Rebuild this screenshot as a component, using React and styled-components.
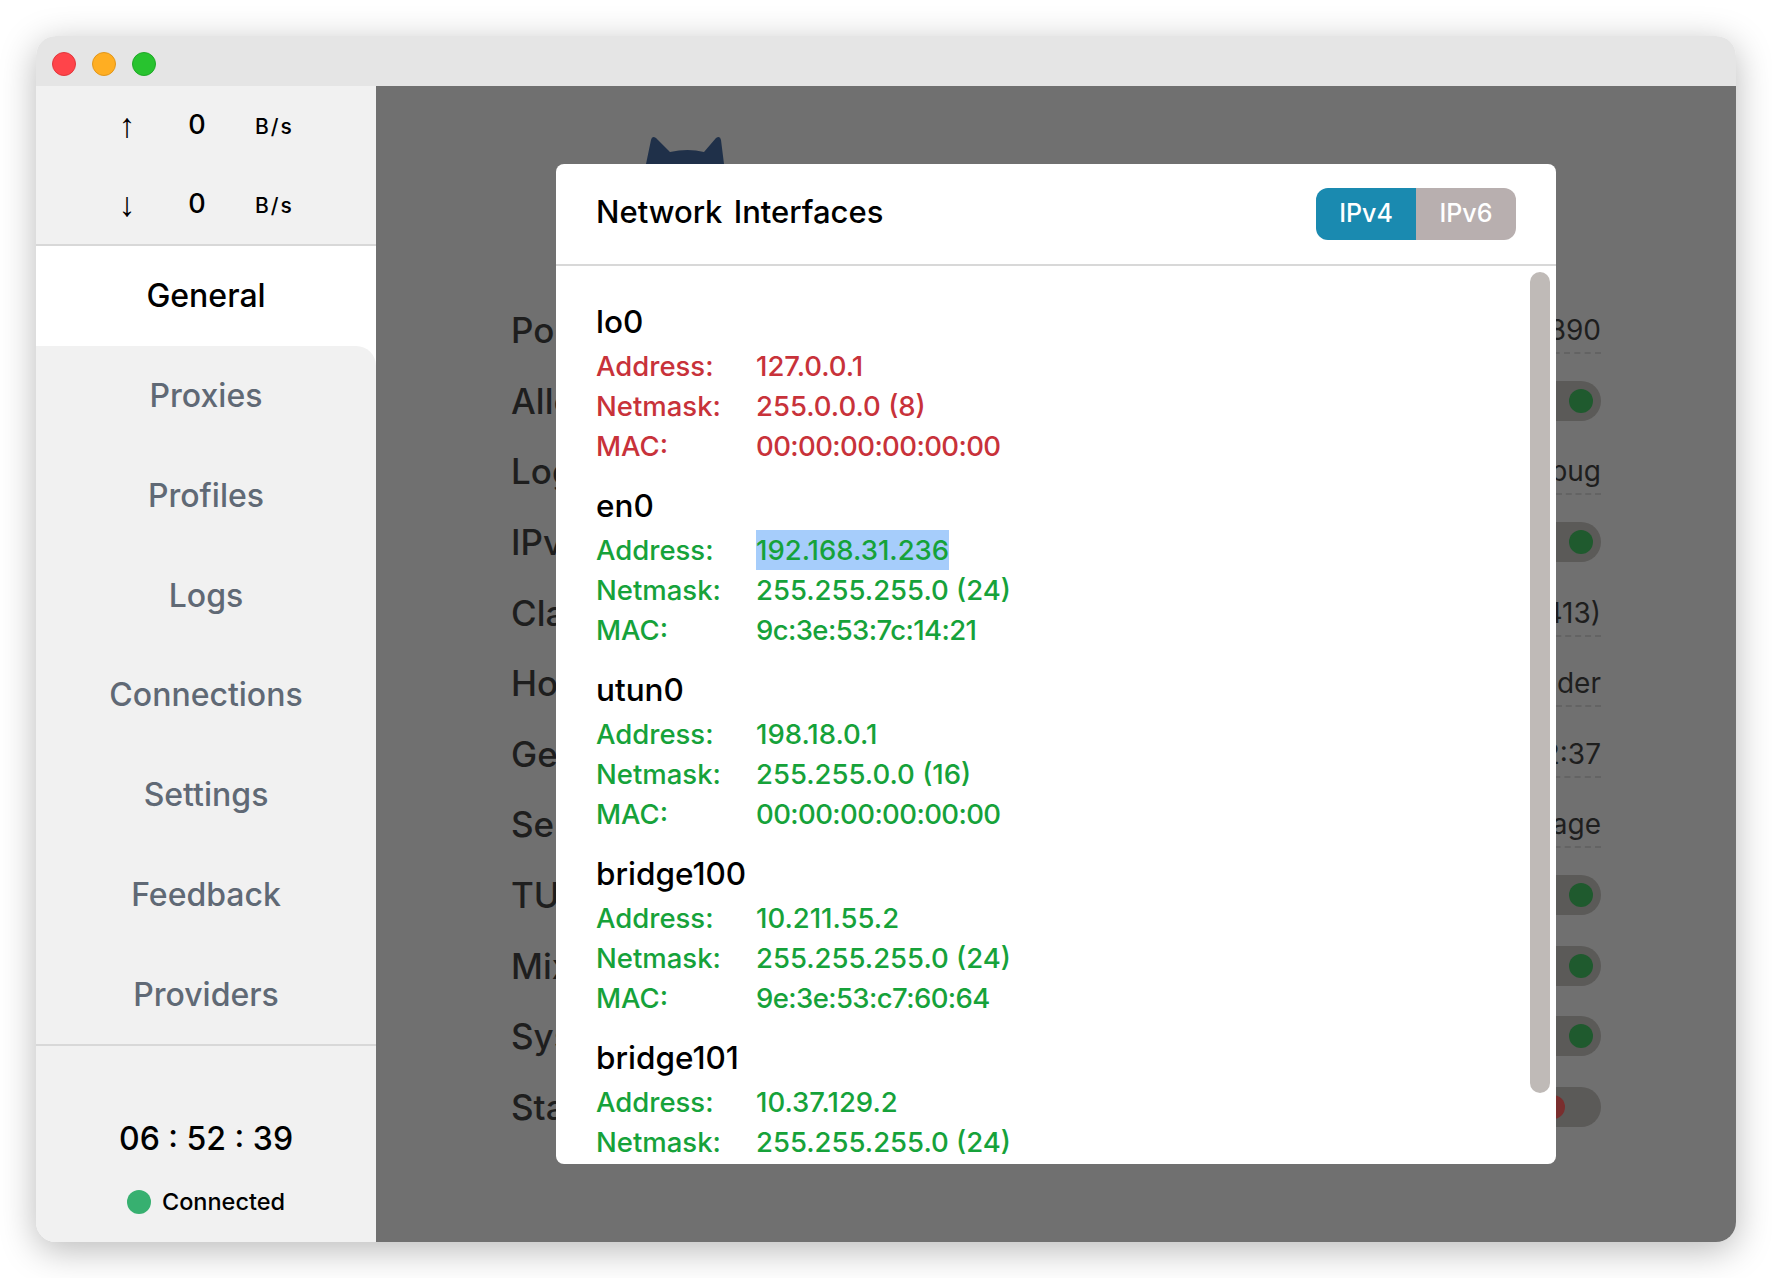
import React from 'react';
import styled, { createGlobalStyle } from 'styled-components';

const GlobalStyle = createGlobalStyle`
  html, body {
    margin: 0;
    background: #fff;
  }
  body {
    font-family: Inter, 'Liberation Sans', Arial, sans-serif;
    -webkit-font-smoothing: antialiased;
  }
`;

const Page = styled.div`
  width: 1772px;
  height: 1278px;
  padding: 36px;
  box-sizing: border-box;
  overflow: hidden;
`;

const Window = styled.div`
  width: 1700px;
  height: 1206px;
  border-radius: 20px;
  overflow: hidden;
  display: flex;
  flex-direction: column;
  box-shadow: 0 8px 36px rgba(0, 0, 0, 0.28);
`;

const TitleBar = styled.div`
  height: 50px;
  flex: none;
  display: flex;
  align-items: center;
  gap: 16px;
  padding: 5px 0 0 16px;
  box-sizing: border-box;
  background: #e5e5e5;
`;

const Light = styled.span`
  width: 24px;
  height: 24px;
  border-radius: 50%;
  box-sizing: border-box;
  background: ${({ $color }) => $color};
  border: 1px solid ${({ $edge }) => $edge};
`;

const Body = styled.div`
  flex: 1;
  min-height: 0;
  display: flex;
  position: relative;
`;

const Sidebar = styled.aside`
  width: 340px;
  flex: none;
  display: flex;
  flex-direction: column;
  background: #f1f1f1;
`;

const Speed = styled.div`
  height: 160px;
  box-sizing: border-box;
  flex: none;
  display: grid;
  grid-template-columns: 64px 76px 1fr;
  grid-auto-rows: 79px;
  padding-left: 59px;
  align-items: center;
  color: #000;
  border-bottom: 2px solid #d8d8d8;
`;

const Arrow = styled.span`
  font-size: 34px;
  line-height: 40px;
  margin-top: -2px;
  text-align: center;
  font-family: 'Liberation Sans', sans-serif;
`;

const SpeedValue = styled.span`
  font-size: 27px;
  font-weight: 500;
  text-align: center;
  margin-top: -2px;
`;

const SpeedUnit = styled.span`
  font-size: 21px;
  font-weight: 500;
  letter-spacing: 2px;
  margin: 2px 0 0 20px;
`;

const Nav = styled.nav`
  flex: none;
  display: flex;
  flex-direction: column;
  background: #fff;
`;

const NavItem = styled.a`
  height: 99.75px;
  display: flex;
  align-items: center;
  justify-content: center;
  font-size: 32px;
  font-weight: 500;
  background: ${({ $active }) => ($active ? '#fff' : '#f1f1f1')};
  color: ${({ $active }) => ($active ? '#000' : '#606975')};
  border-top-right-radius: ${({ $afterActive }) => ($afterActive ? '20px' : '0')};
`;

const Footer = styled.div`
  flex: 1;
  border-top: 2px solid #d8d8d8;
  display: flex;
  flex-direction: column;
  align-items: center;
  padding-top: 73px;
  background: #f1f1f1;
  color: #000;
`;

const Clock = styled.div`
  font-size: 32px;
  font-weight: 500;
  line-height: 40px;
  white-space: pre;
`;

const Status = styled.div`
  margin-top: 23px;
  display: flex;
  align-items: center;
  gap: 11px;
  font-size: 23.5px;
  font-weight: 500;
  line-height: 40px;
`;

const StatusDot = styled.span`
  width: 24px;
  height: 24px;
  border-radius: 50%;
  background: #37b070;
`;

const Main = styled.main`
  flex: 1;
  min-width: 0;
  background: #707070;
  padding: 50px 135px 0 135px;
  box-sizing: border-box;
`;

const Logo = styled.svg`
  display: block;
  width: 240px;
  height: 159px;
  margin-left: 135px;
`;

const SettingRows = styled.div`
  display: grid;
  grid-auto-rows: 70.6px;
  color: #1e1e1e;
`;

const SettingRow = styled.div`
  display: flex;
  justify-content: space-between;
  align-items: center;
`;

const SettingLabel = styled.span`
  font-size: 35px;
  font-weight: 500;
`;

const SettingValue = styled.span`
  font-size: 28px;
  line-height: 44px;
  border-bottom: 2px dashed #636363;
  margin-top: 2px;
`;

const Toggle = styled.span`
  width: 68px;
  height: 40px;
  border-radius: 20px;
  background: #5b5a58;
  display: flex;
  align-items: center;
  padding: 0 8px;
  box-sizing: border-box;
  justify-content: ${({ $on }) => ($on ? 'flex-end' : 'flex-start')};

  &::after {
    content: '';
    width: 24px;
    height: 24px;
    border-radius: 50%;
    background: ${({ $on }) => ($on ? '#1f5a2e' : '#7a2e2e')};
  }
`;

const Modal = styled.section`
  position: absolute;
  left: 520px;
  top: 78px;
  width: 1000px;
  height: 1000px;
  border-radius: 8px;
  overflow: hidden;
  background: #fff;
  display: flex;
  flex-direction: column;
`;

const ModalHeader = styled.header`
  height: 102px;
  box-sizing: border-box;
  flex: none;
  display: flex;
  align-items: center;
  justify-content: space-between;
  padding: 0 40px;
  border-bottom: 2px solid #d8d8d8;
`;

const ModalTitle = styled.h2`
  margin: -5px 0 0;
  font-size: 31px;
  font-weight: 500;
  color: #000;
  word-spacing: 3px;
`;

const Segmented = styled.div`
  display: flex;
  border-radius: 12px;
  overflow: hidden;
`;

const Segment = styled.button`
  width: 100px;
  height: 52px;
  border: 0;
  padding: 0 0 2px;
  font: inherit;
  font-size: 25px;
  font-weight: 500;
  color: #fff;
  background: ${({ $active }) => ($active ? '#1a8ab0' : '#b8afaf')};
`;

const ModalBody = styled.div`
  flex: 1;
  min-height: 0;
  overflow: hidden;
  position: relative;
  padding: 32px 40px 0;
`;

const Thumb = styled.div`
  position: absolute;
  top: 6px;
  right: 6px;
  width: 20px;
  height: 821px;
  border-radius: 10px;
  background: #bfbab7;
`;

const Interface = styled.div`
  margin-bottom: 16px;
`;

const InterfaceName = styled.div`
  font-size: 31.5px;
  font-weight: 500;
  line-height: 48px;
  color: #000;
`;

const Line = styled.div`
  display: flex;
  font-size: 27.5px;
  font-weight: 500;
  line-height: 40px;
  color: ${({ $internal }) => ($internal ? '#c8323a' : '#16a23a')};
`;

const LineLabel = styled.span`
  width: 160px;
  flex: none;
`;

const LineValue = styled.span`
  background: ${({ $selected }) => ($selected ? '#a6cdfb' : 'transparent')};
  letter-spacing: ${({ $mac }) => ($mac ? '-0.6px' : 'normal')};
`;

const settings = [
  { label: 'Port', value: '7890' },
  { label: 'Allow LAN', on: true },
  { label: 'Log Level', value: 'debug' },
  { label: 'IPv6', on: true },
  { label: 'Clash Core', value: '1.13.0 (413)' },
  { label: 'Home Directory', value: 'Open Folder' },
  { label: 'GeoData', value: '06:52:37' },
  { label: 'Service', value: 'Manage' },
  { label: 'TUN Mode', on: true },
  { label: 'Mixin', on: true },
  { label: 'System Proxy', on: true },
  { label: 'Start with Windows', on: false },
];

const interfaces = [
  { name: 'lo0', internal: true, address: '127.0.0.1', netmask: '255.0.0.0 (8)', mac: '00:00:00:00:00:00' },
  { name: 'en0', address: '192.168.31.236', selected: true, netmask: '255.255.255.0 (24)', mac: '9c:3e:53:7c:14:21' },
  { name: 'utun0', address: '198.18.0.1', netmask: '255.255.0.0 (16)', mac: '00:00:00:00:00:00' },
  { name: 'bridge100', address: '10.211.55.2', netmask: '255.255.255.0 (24)', mac: '9e:3e:53:c7:60:64' },
  { name: 'bridge101', address: '10.37.129.2', netmask: '255.255.255.0 (24)', mac: '9e:3e:53:c7:60:65' },
];

const navItems = ['General', 'Proxies', 'Profiles', 'Logs', 'Connections', 'Settings', 'Feedback', 'Providers'];

export default function App() {
  return (
    <Page>
      <GlobalStyle />
      <Window>
        <TitleBar>
          <Light $color="#ff444a" $edge="#e0383c" />
          <Light $color="#ffae22" $edge="#e0961c" />
          <Light $color="#28c32f" $edge="#20a828" />
        </TitleBar>
        <Body>
          <Sidebar>
            <Speed>
              <Arrow>↑</Arrow>
              <SpeedValue>0</SpeedValue>
              <SpeedUnit>B/s</SpeedUnit>
              <Arrow>↓</Arrow>
              <SpeedValue>0</SpeedValue>
              <SpeedUnit>B/s</SpeedUnit>
            </Speed>
            <Nav>
              {navItems.map((item, i) => (
                <NavItem key={item} $active={i === 0} $afterActive={i === 1}>
                  {item}
                </NavItem>
              ))}
            </Nav>
            <Footer>
              <Clock>06 : 52 : 39</Clock>
              <Status>
                <StatusDot />
                Connected
              </Status>
            </Footer>
          </Sidebar>
          <Main>
            <Logo viewBox="0 0 240 159">
              <path
                d="M0 28 L5 4 Q6 -1 10 2 L24 16 Q42 12 58 16 L70 2 Q74 -1 75 4 L78 28 L90 159 L-10 159 Z"
                fill="#1f3049"
              />
            </Logo>
            <SettingRows>
              {settings.map((row) => (
                <SettingRow key={row.label}>
                  <SettingLabel>{row.label}</SettingLabel>
                  {row.value ? <SettingValue>{row.value}</SettingValue> : <Toggle $on={row.on} />}
                </SettingRow>
              ))}
            </SettingRows>
          </Main>
          <Modal>
            <ModalHeader>
              <ModalTitle>Network Interfaces</ModalTitle>
              <Segmented>
                <Segment $active>IPv4</Segment>
                <Segment>IPv6</Segment>
              </Segmented>
            </ModalHeader>
            <ModalBody>
              <Thumb />
              {interfaces.map((item) => (
                <Interface key={item.name}>
                  <InterfaceName>{item.name}</InterfaceName>
                  <Line $internal={item.internal}>
                    <LineLabel>Address:</LineLabel>
                    <LineValue $selected={item.selected}>{item.address}</LineValue>
                  </Line>
                  <Line $internal={item.internal}>
                    <LineLabel>Netmask:</LineLabel>
                    <LineValue>{item.netmask}</LineValue>
                  </Line>
                  <Line $internal={item.internal}>
                    <LineLabel>MAC:</LineLabel>
                    <LineValue $mac>{item.mac}</LineValue>
                  </Line>
                </Interface>
              ))}
            </ModalBody>
          </Modal>
        </Body>
      </Window>
    </Page>
  );
}
